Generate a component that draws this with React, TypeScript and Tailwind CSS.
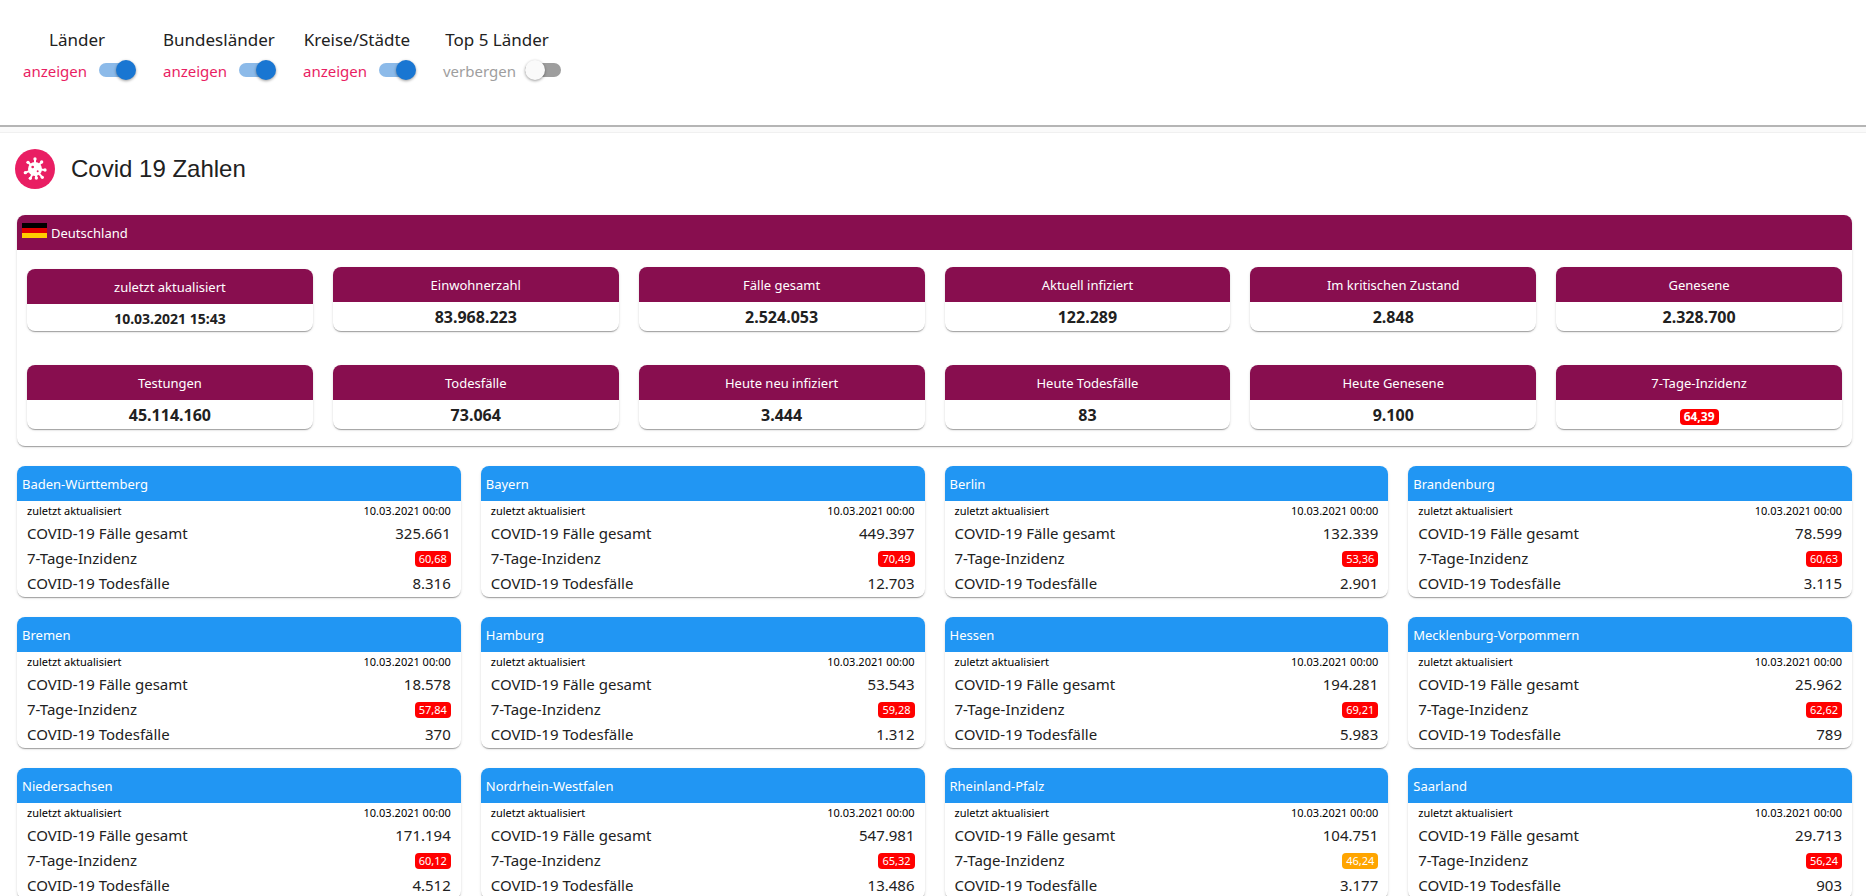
import { useState } from "react";

const stats = [
  { label: "zuletzt aktualisiert", value: "10.03.2021 15:43", kind: "date" },
  { label: "Einwohnerzahl", value: "83.968.223" },
  { label: "Fälle gesamt", value: "2.524.053" },
  { label: "Aktuell infiziert", value: "122.289" },
  { label: "Im kritischen Zustand", value: "2.848" },
  { label: "Genesene", value: "2.328.700" },
  { label: "Testungen", value: "45.114.160" },
  { label: "Todesfälle", value: "73.064" },
  { label: "Heute neu infiziert", value: "3.444" },
  { label: "Heute Todesfälle", value: "83" },
  { label: "Heute Genesene", value: "9.100" },
  { label: "7-Tage-Inzidenz", value: "64,39", kind: "badge" },
];

const states = [
  ["Baden-Württemberg", "325.661", "60,68", "8.316"],
  ["Bayern", "449.397", "70,49", "12.703"],
  ["Berlin", "132.339", "53,36", "2.901"],
  ["Brandenburg", "78.599", "60,63", "3.115"],
  ["Bremen", "18.578", "57,84", "370"],
  ["Hamburg", "53.543", "59,28", "1.312"],
  ["Hessen", "194.281", "69,21", "5.983"],
  ["Mecklenburg-Vorpommern", "25.962", "62,62", "789"],
  ["Niedersachsen", "171.194", "60,12", "4.512"],
  ["Nordrhein-Westfalen", "547.981", "65,32", "13.486"],
  ["Rheinland-Pfalz", "104.751", "46,24", "3.177"],
  ["Saarland", "29.713", "56,24", "903"],
];

const cardShadow =
  "shadow-[0px_2px_1px_-1px_rgba(0,0,0,0.2),0px_1px_1px_0px_rgba(0,0,0,0.14),0px_1px_3px_0px_rgba(0,0,0,0.12)]";

function Toggle({ title, initial }: { title: string; initial: boolean }) {
  const [on, setOn] = useState(initial);
  return (
    <label className="flex w-[140px] cursor-pointer flex-col">
      <span className="w-[108px] text-center text-[17px] leading-6 whitespace-nowrap">{title}</span>
      <span className="mt-1 flex items-start">
        <span
          className={
            on
              ? "w-[76px] text-[15px] leading-[30px] text-[#e91e63]"
              : "w-[82px] text-[15px] leading-[30px] text-[#9e9e9e]"
          }
        >
          {on ? "anzeigen" : "verbergen"}
        </span>
        <input
          type="checkbox"
          role="switch"
          checked={on}
          onChange={(e) => setOn(e.target.checked)}
          className="relative mt-[7px] h-[14px] w-[36px] cursor-pointer appearance-none rounded-full bg-[#9e9e9e] before:absolute before:top-[-3px] before:left-0 before:size-5 before:rounded-full before:bg-[#fafafa] before:shadow-[0_1px_3px_rgba(0,0,0,0.4)] checked:bg-[#8cbae9] checked:before:left-[17px] checked:before:bg-[#1976d2]"
        />
      </span>
    </label>
  );
}

function Badge({ value, bold = false }: { value: string; bold?: boolean }) {
  const high = parseFloat(value.replace(",", ".")) >= 50;
  return (
    <span
      className={`inline-block rounded-[4px] px-1 leading-4 text-white ${high ? "bg-[#ff0000]" : "bg-[#ffa500]"} ${bold ? "text-[12px] font-bold" : "text-[11px]"}`}
    >
      {value}
    </span>
  );
}

function Flag() {
  return (
    <svg viewBox="0 0 5 3" className="mb-1 h-[15px] w-[25px]" aria-hidden="true">
      <path fill="#000" d="M0 0h5v1H0z" />
      <path fill="#d00" d="M0 1h5v1H0z" />
      <path fill="#ffce00" d="M0 2h5v1H0z" />
    </svg>
  );
}

const spikes = [
  [39, 9],
  [59, 18],
  [69, 42],
  [61, 64],
  [43, 66],
  [25, 67],
  [10, 50],
  [18, 19],
];

function VirusIcon() {
  return (
    <svg viewBox="0 0 78 78" className="size-[26px]" aria-hidden="true">
      {spikes.map(([x, y]) => (
        <g key={`${x}-${y}`}>
          <path d={`M39 39L${x} ${y}`} stroke="#fff" strokeWidth="6" />
          <circle cx={x} cy={y} r="5" fill="#fff" />
        </g>
      ))}
      <circle cx="39" cy="39" r="21" fill="#fff" />
      <circle cx="32" cy="33" r="4" fill="#e91e63" />
      <circle cx="47" cy="46" r="3" fill="#e91e63" />
    </svg>
  );
}

export default function App() {
  return (
    <div className="min-h-screen bg-white font-['Noto_Sans',sans-serif] text-[#212121]">
      <header className="flex h-[127px] border-b-2 border-[#b5b5b5] bg-white pt-7 pl-[23px]">
        <Toggle title="Länder" initial={true} />
        <Toggle title="Bundesländer" initial={true} />
        <Toggle title="Kreise/Städte" initial={true} />
        <Toggle title="Top 5 Länder" initial={false} />
      </header>
      <div className="h-[6px] border-b border-[#f0f0f0] bg-[#fafafa]" />

      <div className="flex items-center gap-4 px-[15px] py-4">
        <span className="flex size-10 items-center justify-center rounded-full bg-[#e91e63]">
          <VirusIcon />
        </span>
        <h1 className="font-['Liberation_Sans',sans-serif] text-[24px] leading-8">Covid 19 Zahlen</h1>
      </div>

      <main className="pt-[10px] pr-[14px] pl-[17px]">
        <section className={`overflow-hidden rounded-lg bg-white ${cardShadow}`}>
          <h2 className="flex h-[35px] items-center gap-1 bg-[#880e4f] px-[5px] text-[13px] leading-[37px] text-white">
            <Flag />
            <span className="pt-[2px]">Deutschland</span>
          </h2>
          <div className="grid grid-cols-6 gap-x-5 gap-y-[34px] px-[10px] pt-[17px] pb-[17px]">
            {stats.map((s) => (
              <article key={s.label} className={`self-end overflow-hidden rounded-lg bg-white text-center ${cardShadow}`}>
                <h3 className="h-[35px] bg-[#880e4f] text-[13px] leading-[37px] text-white">{s.label}</h3>
                {s.kind === "date" ? (
                  <p className="h-[27px] text-[14px] leading-[29px] font-bold">{s.value}</p>
                ) : (
                  <p className="h-[29px] text-[16px] leading-[31px] font-bold">
                    {s.kind === "badge" ? <Badge value={s.value} bold /> : s.value}
                  </p>
                )}
              </article>
            ))}
          </div>
        </section>

        <div className="mt-5 grid grid-cols-4 gap-x-5 gap-y-5 pb-5">
          {states.map(([name, cases, incidence, deaths]) => (
            <article key={name} className={`overflow-hidden rounded-lg bg-white ${cardShadow}`}>
              <h3 className="h-[35px] bg-[#2196f3] px-[5px] text-[13px] leading-[37px] text-white">{name}</h3>
              <dl className="px-[10px] pb-px text-[15px] leading-[25px]">
                <div className="flex justify-between text-[11px] leading-5 text-black">
                  <dt>zuletzt aktualisiert</dt>
                  <dd>10.03.2021 00:00</dd>
                </div>
                <div className="flex justify-between">
                  <dt>COVID-19 Fälle gesamt</dt>
                  <dd>{cases}</dd>
                </div>
                <div className="flex justify-between">
                  <dt>7-Tage-Inzidenz</dt>
                  <dd className="flex items-center">
                    <Badge value={incidence} />
                  </dd>
                </div>
                <div className="flex justify-between">
                  <dt>COVID-19 Todesfälle</dt>
                  <dd>{deaths}</dd>
                </div>
              </dl>
            </article>
          ))}
        </div>
      </main>
    </div>
  );
}
